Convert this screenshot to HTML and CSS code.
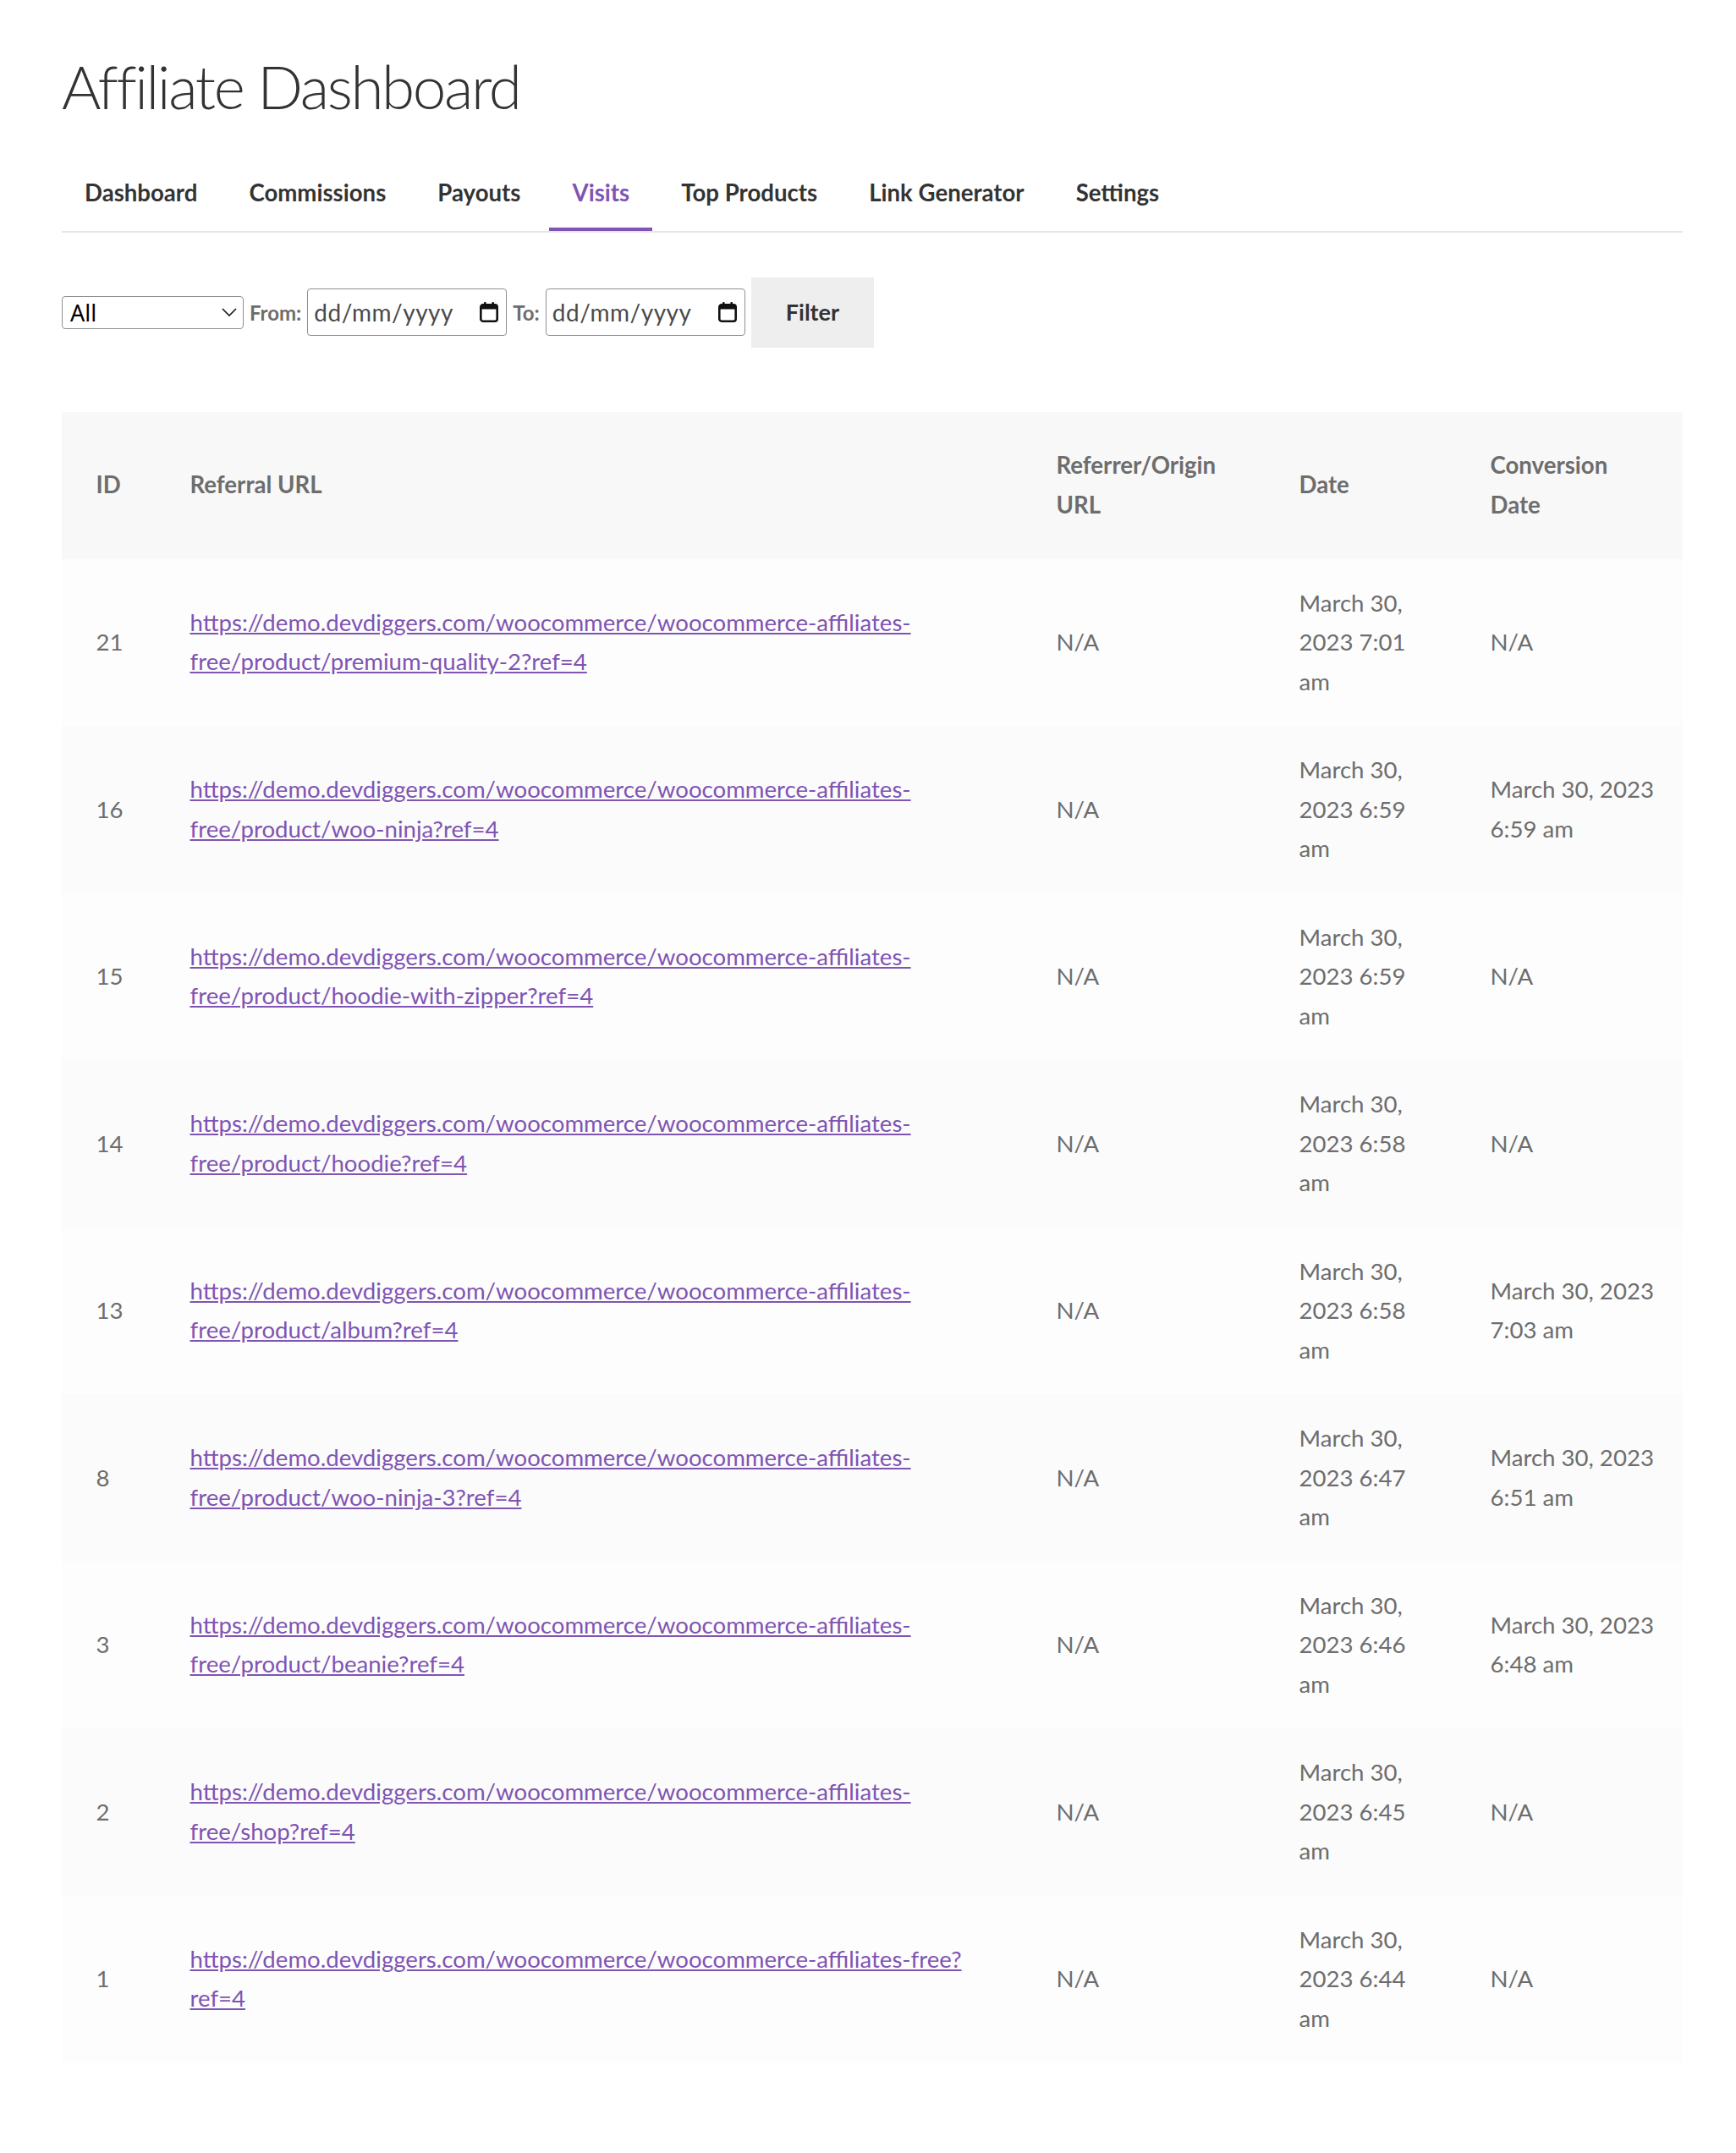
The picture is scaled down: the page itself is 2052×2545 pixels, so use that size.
FILE: index.html
```html
<!DOCTYPE html>
<html lang="en">
<head>
<meta charset="utf-8">
<title>Affiliate Dashboard</title>
<link rel="stylesheet" href="styles.css">
</head>
<body>
<main class="page">
  <h1 class="page-title">Affiliate Dashboard</h1>

  <nav class="tabs">
    <a class="tab" href="#">Dashboard</a>
    <a class="tab" href="#">Commissions</a>
    <a class="tab" href="#">Payouts</a>
    <a class="tab active" href="#">Visits</a>
    <a class="tab" href="#">Top Products</a>
    <a class="tab" href="#">Link Generator</a>
    <a class="tab" href="#">Settings</a>
  </nav>

  <form class="filters">
    <div class="select">
      <span class="select-value">All</span>
      <svg class="chevron" width="18" height="10" viewBox="0 0 18 10"><polyline points="1,1 9,9 17,1" fill="none" stroke="#111" stroke-width="1.6"/></svg>
    </div>
    <span class="label">From:</span>
    <div class="date">
      <span class="date-text">dd/mm/yyyy</span>
      <svg class="cal" width="22" height="24" viewBox="0 0 22 24"><rect x="5" y="0" width="2.6" height="5" rx="1" fill="#111"/><rect x="14.4" y="0" width="2.6" height="5" rx="1" fill="#111"/><rect x="1.3" y="3.3" width="19.4" height="19.4" rx="2.6" fill="none" stroke="#111" stroke-width="2.6"/><rect x="1.3" y="3.3" width="19.4" height="5.2" fill="#111"/></svg>
    </div>
    <span class="label">To:</span>
    <div class="date">
      <span class="date-text">dd/mm/yyyy</span>
      <svg class="cal" width="22" height="24" viewBox="0 0 22 24"><rect x="5" y="0" width="2.6" height="5" rx="1" fill="#111"/><rect x="14.4" y="0" width="2.6" height="5" rx="1" fill="#111"/><rect x="1.3" y="3.3" width="19.4" height="19.4" rx="2.6" fill="none" stroke="#111" stroke-width="2.6"/><rect x="1.3" y="3.3" width="19.4" height="5.2" fill="#111"/></svg>
    </div>
    <button class="btn" type="button">Filter</button>
  </form>

  <table class="visits">
    <colgroup>
      <col class="c-id"><col class="c-url"><col class="c-ref"><col class="c-date"><col class="c-conv">
    </colgroup>
    <thead>
      <tr><th>ID</th><th>Referral URL</th><th>Referrer/Origin URL</th><th>Date</th><th>Conversion Date</th></tr>
    </thead>
    <tbody>
      <tr><td>21</td><td><a href="#">https://demo.devdiggers.com/woocommerce/woocommerce-affiliates-free/product/premium-quality-2?ref=4</a></td><td>N/A</td><td>March 30, 2023 7:01 am</td><td>N/A</td></tr>
      <tr><td>16</td><td><a href="#">https://demo.devdiggers.com/woocommerce/woocommerce-affiliates-free/product/woo-ninja?ref=4</a></td><td>N/A</td><td>March 30, 2023 6:59 am</td><td>March 30, 2023 6:59 am</td></tr>
      <tr><td>15</td><td><a href="#">https://demo.devdiggers.com/woocommerce/woocommerce-affiliates-free/product/hoodie-with-zipper?ref=4</a></td><td>N/A</td><td>March 30, 2023 6:59 am</td><td>N/A</td></tr>
      <tr><td>14</td><td><a href="#">https://demo.devdiggers.com/woocommerce/woocommerce-affiliates-free/product/hoodie?ref=4</a></td><td>N/A</td><td>March 30, 2023 6:58 am</td><td>N/A</td></tr>
      <tr><td>13</td><td><a href="#">https://demo.devdiggers.com/woocommerce/woocommerce-affiliates-free/product/album?ref=4</a></td><td>N/A</td><td>March 30, 2023 6:58 am</td><td>March 30, 2023 7:03 am</td></tr>
      <tr><td>8</td><td><a href="#">https://demo.devdiggers.com/woocommerce/woocommerce-affiliates-free/product/woo-ninja-3?ref=4</a></td><td>N/A</td><td>March 30, 2023 6:47 am</td><td>March 30, 2023 6:51 am</td></tr>
      <tr><td>3</td><td><a href="#">https://demo.devdiggers.com/woocommerce/woocommerce-affiliates-free/product/beanie?ref=4</a></td><td>N/A</td><td>March 30, 2023 6:46 am</td><td>March 30, 2023 6:48 am</td></tr>
      <tr><td>2</td><td><a href="#">https://demo.devdiggers.com/woocommerce/woocommerce-affiliates-free/shop?ref=4</a></td><td>N/A</td><td>March 30, 2023 6:45 am</td><td>N/A</td></tr>
      <tr><td>1</td><td><a href="#">https://demo.devdiggers.com/woocommerce/woocommerce-affiliates-free?<wbr>ref=4</a></td><td>N/A</td><td>March 30, 2023 6:44 am</td><td>N/A</td></tr>
    </tbody>
  </table>
</main>
</body>
</html>
```
FILE: styles.css
```css
* { box-sizing: border-box; }
html, body { margin: 0; background: #ffffff; }
body {
  font-family: Lato, "Open Sans", "Noto Sans", sans-serif;
  color: #6d6d6d;
}
.page { padding: 60px 63px 0 73px; }

.page-title {
  margin: 0;
  font-size: 71px;
  line-height: 84px;
  font-weight: 300;
  color: #333333;
  letter-spacing: -2.4px;
}

.tabs {
  display: flex;
  gap: 7px;
  margin-top: 61px;
  border-bottom: 2px solid #e6e6e6;
}
.tab {
  padding: 0 27px 17.5px;
  line-height: 46px;
  font-size: 27.6px;
  font-weight: 700;
  color: #333333;
  text-decoration: none;
  border-bottom: 4px solid transparent;
}
.tab.active { color: #7f54b3; border-bottom-color: #7f54b3; }

.filters {
  display: flex;
  align-items: center;
  gap: 7px;
  margin: 53px 0 0;
}
.select {
  width: 215px;
  height: 39px;
  border: 1px solid #8f8f8f;
  border-radius: 4px;
  display: flex;
  align-items: center;
  justify-content: space-between;
  padding: 0 7px 0 9px;
  font-family: "Noto Sans", "DejaVu Sans", sans-serif;
  font-size: 27px;
  color: #000;
}
.chevron { display: block; }
.label { font-size: 24px; font-weight: 700; color: #6d6d6d; }
.date {
  width: 236px;
  height: 56px;
  border: 1px solid #8f8f8f;
  border-radius: 4px;
  display: flex;
  align-items: center;
  justify-content: space-between;
  padding: 0 9px 0 7px;
}
.date-text { font-size: 28px; color: #4a4a4a; letter-spacing: 0.5px; }
.cal { display: block; }
.btn {
  border: 0;
  background: #eeeeee;
  color: #333333;
  font-family: inherit;
  font-size: 27px;
  font-weight: 700;
  line-height: 46px;
  padding: 18.5px 41px;
  cursor: pointer;
}

.visits {
  width: 100%;
  margin-top: 76px;
  border-collapse: separate;
  border-spacing: 0;
  table-layout: fixed;
  font-size: 27.6px;
}
.c-id { width: 111px; }
.c-url { width: 1024px; }
.c-ref { width: 287px; }
.c-date { width: 226px; }
.c-conv { width: 268px; }

.visits th {
  background: #f8f8f8;
  padding: 40.5px;
  text-align: left;
  vertical-align: middle;
  font-weight: 700;
  line-height: 46.5px;
  color: #6d6d6d;
}
.visits td {
  padding: 29px 40.5px;
  line-height: 46.5px;
  vertical-align: middle;
  background: #fdfdfd;
}
.visits td:last-child { padding-right: 12px; }
.visits tbody tr:nth-child(even) td { background: #fbfbfb; }
.visits a { color: #7f54b3; text-decoration: underline; }
```
